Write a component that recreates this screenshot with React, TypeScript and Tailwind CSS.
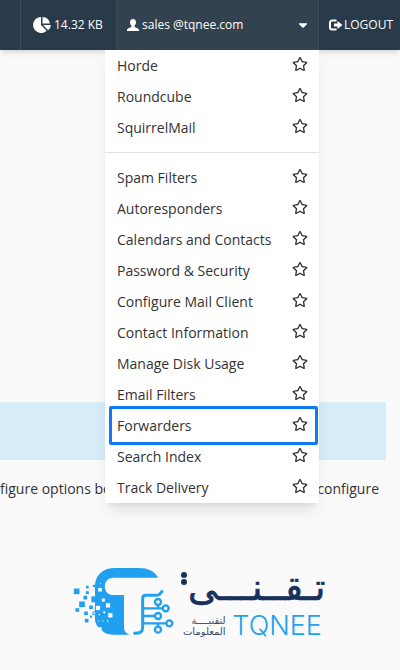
import { FaCaretDown, FaRegStar } from 'react-icons/fa'

const mailApps = ['Horde', 'Roundcube', 'SquirrelMail']
const tools = [
  'Spam Filters',
  'Autoresponders',
  'Calendars and Contacts',
  'Password & Security',
  'Configure Mail Client',
  'Contact Information',
  'Manage Disk Usage',
  'Email Filters',
  'Forwarders',
  'Search Index',
  'Track Delivery',
]

// x, y (centre) and size of the loose squares around the logo mark
const bluePixels = [
  [20, 82, 17], [52, 69, 8], [52, 86, 9], [72, 66, 7], [46, 101, 11], [36, 121, 17], [22, 138, 11],
  [63, 130, 11], [48, 148, 11], [50, 170, 11], [63, 158, 6],
]
const whitePixels = [
  [90, 77, 14], [92, 59, 6], [100, 108, 12], [84, 132, 16], [114, 124, 16], [121, 154, 16],
  [103, 145, 9], [88, 152, 7], [73, 148, 8], [86, 171, 6], [99, 171, 6], [113, 171, 7],
]
const nodes = [[264, 114], [287, 133], [264, 156], [298, 178], [264, 197]]

function PieIcon() {
  return (
    <svg viewBox="0 0 18 16" className="h-4 w-[18px]" fill="currentColor">
      <path d="M8 0v8l5.6 5.8A8 8 0 1 1 8 0z" />
      <path d="M9.5 0a8 8 0 0 1 7.4 6.6H9.5z" />
      <path d="M10 8h8a8 8 0 0 1-2.8 5.3z" />
    </svg>
  )
}

function UserIcon() {
  return (
    <svg viewBox="0 0 12 12" className="size-3" fill="currentColor">
      <path d="M6 0c1.9 0 3 1.4 3 3.3 0 1.5-.6 2.7-1.5 3.5v.9c.3.7 4.2 1.5 4.5 3.2V12H0v-1.1c.3-1.7 4.2-2.5 4.5-3.2v-.9C3.6 6 3 4.8 3 3.3 3 1.4 4.1 0 6 0z" />
    </svg>
  )
}

function LogoutIcon() {
  return (
    <svg viewBox="0 0 14 12" className="h-3 w-3.5">
      <path d="M7.5 1.5H3A2 2 0 0 0 1 3.5v5a2 2 0 0 0 2 2h4.5" fill="none" stroke="currentColor" strokeWidth="2" />
      <path d="M5 4.5H8.5V2L13.5 6l-5 4V7.5H5z" fill="currentColor" />
    </svg>
  )
}

function MenuItem({ label, active }: { label: string; active?: boolean }) {
  return (
    <li className="relative flex h-[31px] items-center justify-between pr-[11px] pl-3">
      <a href="#" className="text-sm">{label}</a>
      <button type="button" className="mb-[3px]" aria-label={`Set ${label} as default`}>
        <FaRegStar className="size-4" />
      </button>
      {active && <span className="pointer-events-none absolute -top-1 -bottom-1 left-1 right-px rounded-[2px] border-3 border-[#0a7bf2]" />}
    </li>
  )
}

function Logo() {
  return (
    <svg viewBox="0 0 780 240" className="w-[260px]" role="img" aria-label="TQNEE">
      <path fill="#22a0f0" d="M75 60C80 30 100 12 135 12H205C235 12 255 22 264 41H130C96 41 96 93 130 93H162V190C162 202 168 209 178 212H130C112 212 101 206 95 198V190H86C79 184 75 175 75 165z" />
      <rect x="64" y="97" width="18" height="18" fill="#22a0f0" />
      {bluePixels.map(([x, y, size]) => (
        <rect key={`${x}-${y}`} x={x - size / 2} y={y - size / 2} width={size} height={size} fill="#22a0f0" />
      ))}
      {whitePixels.map(([x, y, size]) => (
        <rect key={`${x}-${y}`} x={x - size / 2} y={y - size / 2} width={size} height={size} fill="#fafafa" stroke="#22a0f0" strokeWidth="3" />
      ))}
      <g fill="none" stroke="#22a0f0" strokeWidth="8" strokeLinecap="round">
        <path strokeWidth="9" d="M194 208C212 208 218 204 218 190V103Q218 94 227 94H255C268 94 270 90 276 82" />
        <path strokeWidth="7" d="M219 133H278M219 156H255M219 178H289M264 123V133M264 178V188" />
        {nodes.map(([x, y]) => <circle key={`${x}-${y}`} cx={x} cy={y} r="9" strokeWidth="7" fill="#fafafa" />)}
      </g>
      <text x="766" y="108" fontSize="112" direction="rtl" fontFamily="'DejaVu Sans', sans-serif" fill="#17305c" stroke="#17305c" strokeWidth="2">تـقــنـــى</text>
      <circle cx="342" cy="33" r="9" fill="#17305c" />
      <circle cx="342" cy="54" r="9" fill="#17305c" />
      <text x="487" y="212" fontSize="81" fontFamily="Inter, sans-serif" fontWeight="300" fill="#22a0f0">TQNEE</text>
      <text x="467" y="181" fontSize="30" direction="rtl" fontFamily="'DejaVu Sans', sans-serif" fill="#3b4a6b">لتقنيــــة</text>
      <text x="467" y="213" fontSize="30" direction="rtl" fontFamily="'DejaVu Sans', sans-serif" fill="#3b4a6b">المعلومات</text>
    </svg>
  )
}

export default function App() {
  return (
    <div className="min-h-screen bg-[#fafafa] font-['Open_Sans',sans-serif] text-[#333]">
      <header className="relative flex h-[50px] bg-[#293a4a] text-xs text-white shadow-md">
        <div className="w-5" />
        <div className="flex w-24 items-center gap-[3px] border-l border-[#3b4c5c] pl-3">
          <PieIcon />
          14.32 KB
        </div>
        <div className="flex-1 border-x border-[#3b4c5c] bg-[#33424f]">
          <button type="button" className="flex h-full w-full items-center gap-[3px] px-2.5">
            <UserIcon />
            sales @tqnee.com
            <FaCaretDown className="ml-auto h-3.5 w-2.5" />
          </button>
          <ul className="absolute top-[50px] left-[105px] right-[81px] z-10 bg-white text-[#333] shadow-lg">
            {mailApps.map((m) => <MenuItem key={m} label={m} />)}
            <li className="my-[9px] h-px bg-[#e0e0e0]" />
            {tools.map((m) => <MenuItem key={m} label={m} active={m === 'Forwarders'} />)}
          </ul>
        </div>
        <a href="#" className="flex w-[81px] items-center gap-px pl-2.5">
          <LogoutIcon />
          LOGOUT
        </a>
      </header>
      <main className="pt-[352px]">
        <div className="mr-[14px] h-[58px] bg-[#d7edf9]" />
        <p className="mt-[19px] mr-[21px] flex justify-between text-sm">
          <span>figure options be</span>
          <span>configure</span>
        </p>
        <div className="mt-[65px] ml-[70px]"><Logo /></div>
      </main>
    </div>
  )
}
